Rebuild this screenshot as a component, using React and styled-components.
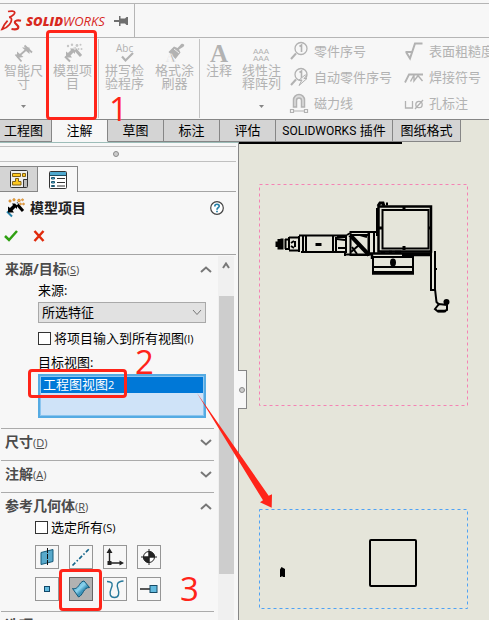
import React from "react";
import styled, { createGlobalStyle } from "styled-components";

const UI = '"Open Sans", "Noto Sans CJK SC", sans-serif';
const RED = "#ff2419";

const Global = createGlobalStyle`
  * { box-sizing: border-box; }
  body { margin: 0; overflow: hidden; background: #f7f7f7; font: 13px/16px ${UI}; color: #000; }
  button, select, input { font: inherit; color: inherit; margin: 0; padding: 0; }
  button { background: none; border: 0; }
  svg { display: block; flex: none; }
`;

const Page = styled.div`
  position: relative;
  display: flex;
  flex-direction: column;
  height: 100vh;
  overflow: hidden;
  white-space: nowrap;
`;

const TitleBar = styled.header`
  display: flex;
  flex: none;
  margin-top: 3px;
  height: 35px;
  border: solid #b5b5b5;
  border-width: 1px 0;
`;

const Brand = styled.div`
  display: flex;
  align-items: center;
  width: 135px;
  border-right: 1px solid #b5b5b5;
  color: #d8281e;
`;

const Wordmark = styled.span`
  margin-left: 4px;
  width: 88px;
  font: italic 13px/16px "Open Sans", sans-serif;
  b { font-weight: 800; }
`;

const Ribbon = styled.div`
  display: flex;
  flex: none;
  height: 81px;
  color: #b2b2b2;
`;

const Tool = styled.button`
  display: flex;
  flex: none;
  flex-direction: column;
  align-items: center;
  width: ${(p) => p.$w}px;
  height: 81px;
  padding-top: 5px;
  line-height: 13px;
`;

const ToolLabel = styled.span`
  margin-top: 1px;
  height: 41px;
`;

const Separator = styled.i`
  flex: none;
  width: 1px;
  margin: 1px 0;
  background: #c4c4c4;
`;

const ToolColumn = styled.div`
  display: flex;
  flex: none;
  flex-direction: column;
  width: 115px;
`;

const SmallTool = styled.button`
  display: flex;
  align-items: center;
  gap: 5px;
  height: 26px;
  padding-left: 4px;
`;

const Tabs = styled.nav`
  display: flex;
  flex: none;
  height: 23px;
  border-top: 1px solid #868686;
  background: #e5e5da;
`;

const Tab = styled.button`
  flex: none;
  width: ${(p) => p.$w}px;
  padding-bottom: 2px;
  border: solid #868686;
  border-width: 0 1px 1px 0;
  border-bottom-color: ${(p) => (p.$active ? "#f7f7f7" : "#868686")};
  background: ${(p) => (p.$active ? "#f7f7f7" : "#d4d4d4")};
  line-height: 18px;
  &:first-child { margin-left: -4px; }
`;

const Latin = styled.span`
  font: 12px/16px Roboto, sans-serif;
`;

const Main = styled.main`
  display: flex;
  flex: 1;
  min-height: 0;
`;

const Panel = styled.aside`
  display: flex;
  flex: none;
  flex-direction: column;
  width: 239px;
  border-top: 1px solid #9dbdb9;
  border-right: 1px solid #868686;
`;

const Splitter = styled.div`
  display: flex;
  flex: none;
  align-items: center;
  justify-content: center;
  height: 16px;
  margin: 3px 2px 4px 0;
  padding-right: 4px;
  border: solid #c0c0c0;
  border-width: 1px 0;
`;

const Dot = styled.i`
  width: 6px;
  height: 6px;
  border: 1px solid #8a8a8a;
  border-radius: 50%;
  background: #ccc;
`;

const PanelTabs = styled.div`
  display: flex;
  flex: none;
  height: 26px;
  margin-right: 2px;
  box-shadow: inset 0 -1px #a5a5a5;
`;

const PanelTab = styled.button`
  display: grid;
  place-items: center;
  width: ${(p) => (p.$active ? 40 : 38)}px;
  border: solid #868686;
  border-width: 1px 1px ${(p) => (p.$active ? 0 : 1)}px 0;
  background: ${(p) => (p.$active ? "#f7f7f7" : "#d4d4d4")};
`;

const PanelTitle = styled.div`
  display: flex;
  flex: none;
  align-items: center;
  gap: 5px;
  height: 32px;
  padding: 0 14px 0 5px;
`;

const Title = styled.h1`
  flex: 1;
  margin: 0;
  font: 700 14px/20px ${UI};
  color: #222;
`;

const Actions = styled.div`
  display: flex;
  flex: none;
  align-items: flex-start;
  gap: 15px;
  height: 31px;
  margin-right: 2px;
  padding: 6px 4px;
  border-bottom: 1px solid #a5a5a5;
`;

const Scroller = styled.div`
  display: flex;
  flex: 1;
  min-height: 0;
`;

const Groups = styled.div`
  flex: 1;
  margin: 1px 4px 0 1px;
  min-width: 0;
  overflow: hidden;
`;

const Group = styled.section`
  border-bottom: 1px solid #ababab;
`;

const GroupHead = styled.button`
  display: flex;
  align-items: center;
  justify-content: space-between;
  width: 100%;
  height: ${(p) => (p.$open ? 26 : 31)}px;
  padding: 0 2px ${(p) => (p.$open ? 0 : 4)}px 4px;
  font-weight: 700;
  font-size: 14px;
  color: #4b4b4b;
`;

const Key = styled.span`
  font-weight: 400;
  font-size: 11px;
`;

const Fields = styled.div`
  display: flex;
  flex-direction: column;
  padding: 0 8px 10px 37px;
`;

const FieldLabel = styled.label`
  height: 20px;
  line-height: 16px;
`;

const SelectBox = styled.div`
  display: grid;
  align-items: center;
  height: 21px;
  border: 1px solid #a9a9a9;
  background: #e1e1e1;
  > * { grid-area: 1 / 1; }
  svg { justify-self: end; margin-right: 3px; pointer-events: none; }
`;

const Select = styled.select`
  appearance: none;
  width: 100%;
  height: 19px;
  padding: 0 3px;
  border: 0;
  background: transparent;
  line-height: 19px;
`;

const Check = styled.label`
  display: flex;
  align-items: center;
  gap: 3px;
  height: 31px;
  input {
    appearance: none;
    width: 13px;
    height: 13px;
    border: 1px solid #333;
    background: #fff;
  }
`;

const ListBox = styled.ul`
  height: 44px;
  margin: 0;
  padding: 1px;
  border: 2px solid #55abe3;
  background: #cfe3f8;
  box-shadow: inset 0 0 0 1px #8cc5ef;
  list-style: none;
`;

const ListItem = styled.li`
  height: 16px;
  padding-left: 2px;
  background: #0078d7;
  color: #fff;
  line-height: 15px;
`;

const Geometry = styled.div`
  padding: 0 0 10px 34px;
  ${Check} { height: 16px; margin-bottom: 10px; }
`;

const IconGrid = styled.div`
  display: grid;
  grid-template-columns: repeat(4, 24px);
  gap: 8px 10px;
`;

const IconButton = styled.button`
  display: grid;
  place-items: center;
  height: 24px;
  border: 1px solid ${(p) => (p.$on ? "#666" : "#969696")};
  background: ${(p) => (p.$on ? "#b2b2b2" : "#f7f7f7")};
`;

const ScrollBar = styled.div`
  display: flex;
  flex: none;
  flex-direction: column;
  width: 16px;
  margin: 1px 4px 0 0;
  background: #f0f0f0;
`;

const ScrollUp = styled.button`
  display: grid;
  place-items: center;
  height: 18px;
`;

const Thumb = styled.div`
  height: 278px;
  margin: 22px 0 0 1px;
  background: #cdcdcd;
`;

const Sheet = styled.div`
  position: relative;
  flex: 1;
  min-width: 0;
  background: #e5e5da;
`;

const SheetEdge = styled.div`
  width: 65%;
  height: 2px;
  background: #000;
`;

const Handle = styled.button`
  position: absolute;
  left: -1px;
  top: 228px;
  display: flex;
  align-items: center;
  width: 9px;
  height: 39px;
  padding-left: 1px;
  border: 1px solid #868686;
  border-left: 0;
  background: #f7f7f7;
`;

const View = styled.div`
  position: absolute;
  left: 20px;
  top: ${(p) => p.$top}px;
`;

const Frame = styled.div`
  position: absolute;
  left: ${(p) => p.$x}px;
  top: ${(p) => p.$y}px;
  width: ${(p) => p.$w}px;
  height: ${(p) => p.$h}px;
  border: 3px solid ${RED};
  border-radius: 4px;
  pointer-events: none;
`;

const Step = styled.span`
  position: absolute;
  left: ${(p) => p.$x}px;
  top: ${(p) => p.$y}px;
  font: 33px/34px "Open Sans", sans-serif;
  color: ${RED};
  pointer-events: none;
`;

const Pointer = styled.svg`
  position: absolute;
  left: 190px;
  top: 388px;
  pointer-events: none;
`;

const Svg = ({ w, h = w, children, ...rest }) => (
  <svg width={w} height={h} viewBox={`0 0 ${w} ${h}`} fill="none" stroke="currentColor" aria-hidden="true" {...rest}>
    {children}
  </svg>
);

const Logo = () => (
  <Svg w={22} h={24} strokeWidth="1.8">
    <path d="M8 2.500c3-.8 6.600-.6 6.700.8.200 1.600-2.700 3.700-5.500 5 3.300 0 2.800 4 .3 7.200-1.700 2.200-4.200 4-7.500 4.800 2-4.600 3.600-6.600 5.600-8.600" />
    <path d="M21 11.700c-3-.8-6-.2-6.200 1.500-.2 1.800 4 2.900 3.500 5.300-.4 1.800-3.300 2.200-6.800 1.500" strokeWidth="2.200" />
  </Svg>
);

const Pin = () => (
  <Svg w={15} h={12} stroke="none" fill="#6e6e6e">
    <path d="M0 5h5v2H0zM5 1h1.500v2.500H11L12.500 2H14v8h-1.500L11 8.500H6.500V11H5z" />
  </Svg>
);

const Dimension = () => (
  <Svg w={20} strokeWidth="1.800">
    <path d="m10.500 2.500 7.500 7M1.500 11.500l6 7M5 13l8.500-7.500" />
    <path d="M3 15V8.500L9.500 14zM8 4.500h7.500V11z" fill="currentColor" stroke="none" />
  </Svg>
);

const Wand = ({ color }) => (
  <Svg w={20} h={20} strokeWidth="2">
    <path d="m2 13.500 5 5M4 12l7-5" stroke={color ? "#2681a8" : "currentColor"} />
    <path d="M3 14.500V8.500L5 10l3-3-1-1.500h5V11l-1.500-1.500-3 3L9 14.500z" fill="currentColor" stroke="none" />
    <path d="m11 5 7 8" strokeWidth="3" />
    <path d="m10.500 4.500 2 2.200" stroke={color ? "#e5eef3" : "#ddd"} strokeWidth="2" />
    <g fill={color ? "#f3b63a" : "#c6c6c6"} stroke={color ? "#b96222" : "none"} strokeWidth=".5">
      <circle cx="5" cy="3" r="1.200" /><circle cx="9" cy="1.800" r="1.200" /><circle cx="14" cy="2.500" r="1.400" />
      <circle cx="17.500" cy="1.800" r="1" /><circle cx="15.500" cy="6" r="1" /><circle cx="18.500" cy="6" r="1" />
    </g>
  </Svg>
);

const Spell = () => (
  <Svg w={20} h={20}>
    <text x="1" y="9" fontSize="10" fontFamily="Open Sans" fill="currentColor" stroke="none">Abc</text>
    <path d="m7 13.500 3.500 4L18 10" strokeWidth="2.200" />
  </Svg>
);

const Brush = () => (
  <Svg w={20} h={20} stroke="none" fill="currentColor">
    <path d="M19 1.500c-1.500-1.300-3-.6-4 1L12.500 5 9 3.500 3.500 9l7 7 5-6.500-1.500-3 4-2.500c1-.7 1.600-1.800 1-2.500z" />
    <path d="m9 6 5 4" stroke="#eee" />
    <text x="1" y="19" fontSize="13" fontFamily="Liberation Serif" fontWeight="700" stroke="#f7f7f7" strokeWidth=".6">A</text>
  </Svg>
);

const Note = () => (
  <Svg w={20} h={20} stroke="none" fill="currentColor">
    <text x="1" y="19" fontSize="25" fontFamily="Liberation Serif" fontWeight="700">A</text>
  </Svg>
);

const Pattern = () => (
  <Svg w={20} h={20} stroke="none" fill="currentColor">
    <text x="1" y="11" fontSize="8" fontFamily="Liberation Sans">AAA</text>
    <text x="1" y="18" fontSize="8" fontFamily="Liberation Sans">AAA</text>
  </Svg>
);

const Balloon = ({ auto }) => (
  <Svg w={20} h={20} strokeWidth="1.300">
    <circle cx="12" cy="7.500" r="6" />
    <path d="m2 18 5-5.500" strokeWidth="2" />
    <path d="m10.500 5.500 2-1.500v7" strokeWidth="1.600" />
    {auto && <path d="m16 8-6 5h3l-3 5.500 8-7h-3l3-3.500z" fill="#f1f1f1" strokeWidth="1" />}
  </Svg>
);

const Magnet = () => (
  <Svg w={20} h={20} strokeWidth="1.200">
    <path d="M4.500 14V7a5.500 5.500 0 0 1 11 0v7h-3V7.500a2.500 2.500 0 0 0-5 0V14z" fill="#ddd" strokeWidth="1.500" />
    <path d="M5 18h10M1.500 16.500h3v3h-3zM15.500 16.500h3v3h-3z" />
  </Svg>
);

const Rough = () => (
  <Svg w={20} h={20} strokeWidth="2">
    <path d="M1.500 11H9M2 11l4 6.500L11 2.500h7.500" />
  </Svg>
);

const Weld = () => (
  <Svg w={20} h={16} strokeWidth="1.400">
    <path d="m1 13.500 4-8h14" strokeWidth="1.800" />
    <path d="M6.500 12.500 10 6v6l4.500-6M13.500 6l5 6" />
  </Svg>
);

const Hole = () => (
  <Svg w={20} h={16} strokeWidth="1.300">
    <path d="M1.500 6v7h7V6M11 14l8-9" /><circle cx="15" cy="9.500" r="3.200" />
  </Svg>
);

const Drop = () => (
  <Svg w={5} h={3} fill="#858585" stroke="none"><path d="M0 0h5L2.500 3z" /></Svg>
);

const Chevron = ({ up, w = 12, width = 2 }) => (
  <Svg w={w} h={7} stroke="#777" strokeWidth={width}>
    <path d={up ? `M1 6 ${w / 2} 1.500 ${w - 1} 6` : `M1 1l${w / 2 - 1} 4.500L${w - 1} 1`} />
  </Svg>
);

const TreeIcon = () => (
  <Svg w={18} h={18} strokeWidth="1">
    <rect x=".5" y=".5" width="17" height="17" rx="1" fill="#eee" stroke="#333" />
    <g fill="#ffc91f" stroke="#806018"><path d="M2.500 3.500h8v3h-8zM12.500 3.500h3v3h-3zM5.500 8.500h3v3h2.500v3.500H2.500v-3.500h3z" /></g>
    <path d="M13.500 17V9.500H17" stroke="#333" /><path d="M14 10h3v7h-3z" fill="#bbb" stroke="none" />
  </Svg>
);

const PropertyIcon = () => (
  <Svg w={18} h={18} strokeWidth="1">
    <rect x=".5" y=".5" width="17" height="17" rx="1" fill="#fff" stroke="#333" />
    <path d="M1 1h16v3H1z" fill="#4fa9cf" stroke="none" /><path d="M1 4.500h16" stroke="#1d4c61" />
    <g fill="#69c3e5" stroke="#1d5872"><path d="M2.500 6.500h3v1.500h-3zM2.500 10.500h3V12h-3zM2.500 14.500h3v1h-3z" /></g>
    <path d="M8 7.500h8M8 11.500h8M8 15h8" stroke="#333" />
  </Svg>
);

const HelpIcon = () => (
  <Svg w={14} h={14}>
    <circle cx="7" cy="7" r="6.300" fill="#fff" stroke="#444" strokeWidth="1.200" />
    <path d="M4.800 5.500C4.800 2.500 9.300 2.600 9.200 5.200 9.100 6.800 7 6.700 7 8.800M7 9.800v1.500" stroke="#2580a8" strokeWidth="1.700" />
  </Svg>
);

const Plane = () => (
  <Svg w={18}>
    <path d="m3 4.500 12-3v12l-12 3z" fill="#58a9cb" stroke="#155b7b" /><path d="M9.500 0v18" stroke="#111" strokeDasharray="5 1" />
  </Svg>
);
const Axis = () => (
  <Svg w={20}><path d="M1.500 18.500 18.500 1.500" stroke="#16678c" strokeWidth="1.700" strokeDasharray="4 2 1.500 2" /></Svg>
);
const Origin = () => (
  <Svg w={20} stroke="#222">
    <path d="M4.500 16V5M4 16h11" strokeWidth="1.400" />
    <path d="m4.500 1 3 5h-6zM19 16l-4.500-2.500v5zM2.500 14h4v4h-4z" fill="#222" stroke="none" />
  </Svg>
);
const Mass = () => (
  <Svg w={18} stroke="#222">
    <circle cx="9" cy="9" r="5.500" fill="#fff" /><path d="M9 9V3.500A5.500 5.500 0 0 1 14.500 9zM9 9v5.500A5.500 5.500 0 0 1 3.500 9z" fill="#222" />
    <path d="M9 1v16M1 9h16" />
  </Svg>
);
const Point = () => <Svg w={6} stroke="#12496a"><rect x=".5" y=".5" width="5" height="5" fill="#62bade" /></Svg>;
const Surface = () => (
  <Svg w={20}>
    <defs>
      <linearGradient id="surf" x1="0" y1="0" x2="1" y2="1">
        <stop offset="0" stopColor="#3a95ba" /><stop offset=".45" stopColor="#8bd3ee" /><stop offset=".6" stopColor="#3b93b9" /><stop offset="1" stopColor="#62b6d7" />
      </linearGradient>
    </defs>
    <path d="M1.500 9.500C5 10.500 7 8 8.500 5.500S12 2 13 2l5.500 6.500c-3 0-4.500 1.500-6 4s-3 5-5 5.500z" fill="url(#surf)" stroke="#0e5679" />
  </Svg>
);
const Curve = () => (
  <Svg w={20} stroke="#28799b" strokeWidth="1.400">
    <path d="M2 2.500c6 0 6 3 4 7.500s-1 8.500 3.500 8.500S14.500 14 13 10s-1.500-7.500 5.500-8" />
  </Svg>
);
const Routing = () => (
  <Svg w={20} stroke="#222">
    <path d="M1 10h10" strokeWidth="1.500" /><rect x="11" y="6.500" width="7" height="7" fill="#62bade" stroke="#174b66" />
  </Svg>
);

const GEOMETRY = [
  ["基准面", Plane], ["基准轴", Axis], ["原点", Origin], ["质心", Mass],
  ["点", Point], ["曲面", Surface], ["曲线", Curve], ["步路点", Routing],
];

const Machine = () => (
  <svg width="209" height="222" viewBox="259 184 209 222" fill="none" stroke="#000" strokeWidth="2" aria-hidden="true">
    <rect x="259.500" y="184.500" width="208" height="221" stroke="#f582b4" strokeWidth="1" strokeDasharray="3 3" />
    <path d="M378.500 206.500h52.500v45h-52.500z" strokeWidth="2.500" />
    <path d="M382.500 210h46v38.500h-46z" />
    <path d="M377.500 208v28" strokeWidth="3" />
    <path d="m378 206 2-3h3l1 3M386 204h2M404 207v3M404 246v4M378 228h4M428 228h4" strokeWidth="3" />
    <path d="M299 235.500h48M301 252h43M306 235v17M303 236v16M333 235v17M336 237v15M299 236v16" />
    <path d="M277 241.500v5.500M279 239v10.500M282 238.500v11" strokeWidth="3" />
    <path d="M285 239.500h4M285 249h4M285.500 239v10M289 237.500h10M289 250.500h10M289 237v13M295 241v6M291 243l3-2M291 246l3 2" />
    <path d="M315.500 244.500h6" strokeWidth="3" />
    <path d="M337 237h9v15h-9M337 239l8 1M338 248h8M344 254.500h29M345 251v5M349.500 232h19v23h-18v-17M350 235h18M347 235l5-3" />
    <path d="m350 235 19 20" strokeWidth="4" />
    <path d="m351 252 8-7M360 235l7 2M352 247l5 7M369 232v22M374 233v21M368 232h11" />
    <path d="M368 253.500h63M372 255v4M381 253h4M389 252h3M402 255h29M395 252h6" strokeWidth="2.500" />
    <path d="M373 257h40v15h-40zM373 267h40" />
    <path d="M372 273h42" strokeWidth="3.500" />
    <ellipse cx="393" cy="262.500" rx="3" ry="4" fill="#000" stroke="none" />
    <path d="M431 251v39M435 251v39M430 290h5M436 268v2" />
    <path d="m435 289 1.500 13 3 3" />
    <path d="m435 309 4-5 8 1v5l-3 1.500h-6zM444 301l4 1M447 300v5" />
    <circle cx="446.500" cy="302" r="2" fill="#000" />
    <path d="M438 311h8" strokeWidth="2.500" />
  </svg>
);

const TopView = () => (
  <svg width="209" height="100" viewBox="259 509 209 100" fill="none" stroke="#000" aria-hidden="true">
    <rect x="259.500" y="509.500" width="208" height="99" stroke="#4fa2f5" strokeDasharray="3 3" />
    <rect x="370" y="540" width="46" height="46" rx="1" strokeWidth="2" />
    <path d="M280 569.500 281.500 567l3.500 2v8h-2l-1-1-1 1h-1z" fill="#000" stroke="none" />
  </svg>
);

const Head = ({ text, k, up }) => (
  <GroupHead $open={up} aria-expanded={!!up}>
    <span>{text}<Key>(<u>{k}</u>)</Key></span>
    <Chevron up={up} />
  </GroupHead>
);

export default function App() {
  return (
    <Page>
      <Global />
      <TitleBar>
        <Brand><Logo /><Wordmark><b>SOLID</b>WORKS</Wordmark><Pin /></Brand>
      </TitleBar>
      <Ribbon>
        <Tool $w={47}><Dimension /><ToolLabel>智能尺<br />寸</ToolLabel><Drop /></Tool>
        <Tool $w={51}><Wand /><ToolLabel>模型项<br />目</ToolLabel></Tool>
        <Separator />
        <Tool $w={51}><Spell /><ToolLabel>拼写检<br />验程序</ToolLabel></Tool>
        <Tool $w={49}><Brush /><ToolLabel>格式涂<br />刷器</ToolLabel></Tool>
        <Separator />
        <Tool $w={38}><Note /><ToolLabel>注释</ToolLabel></Tool>
        <Tool $w={47}><Pattern /><ToolLabel>线性注<br />释阵列</ToolLabel><Drop /></Tool>
        <ToolColumn>
          <SmallTool><Balloon />零件序号</SmallTool>
          <SmallTool><Balloon auto />自动零件序号</SmallTool>
          <SmallTool><Magnet />磁力线</SmallTool>
        </ToolColumn>
        <ToolColumn>
          <SmallTool><Rough />表面粗糙度</SmallTool>
          <SmallTool><Weld />焊接符号</SmallTool>
          <SmallTool><Hole />孔标注</SmallTool>
        </ToolColumn>
      </Ribbon>
      <Tabs>
        <Tab $w={56}>工程图</Tab>
        <Tab $w={56} $active>注解</Tab>
        <Tab $w={56}>草图</Tab>
        <Tab $w={56}>标注</Tab>
        <Tab $w={56}>评估</Tab>
        <Tab $w={117}><Latin>SOLIDWORKS</Latin> 插件</Tab>
        <Tab $w={68}>图纸格式</Tab>
      </Tabs>
      <Main>
        <Panel>
          <Splitter><Dot /></Splitter>
          <PanelTabs>
            <PanelTab aria-label="设计树"><TreeIcon /></PanelTab>
            <PanelTab aria-label="属性" $active><PropertyIcon /></PanelTab>
          </PanelTabs>
          <PanelTitle>
            <Wand color /><Title>模型项目</Title>
            <button aria-label="帮助"><HelpIcon /></button>
          </PanelTitle>
          <Actions>
            <button aria-label="确定"><Svg w={14} h={12} stroke="#2fa012" strokeWidth="2.500"><path d="m1 6 4 4 8-9" /></Svg></button>
            <button aria-label="取消"><Svg w={12} h={12} stroke="#e02a0c" strokeWidth="2.500"><path d="m1.500 1 9 10M10.500 1l-9 10" /></Svg></button>
          </Actions>
          <Scroller>
            <Groups>
              <Group>
                <Head text="来源/目标" k="S" up />
                <Fields>
                  <FieldLabel htmlFor="source">来源:</FieldLabel>
                  <SelectBox>
                    <Select id="source"><option>所选特征</option></Select>
                    <Chevron w={10} width={1} />
                  </SelectBox>
                  <Check><input type="checkbox" /><span>将项目输入到所有视图<Key>(I)</Key></span></Check>
                  <FieldLabel as="span" id="targets">目标视图:</FieldLabel>
                  <ListBox role="listbox" aria-labelledby="targets" tabIndex={0}>
                    <ListItem role="option" aria-selected="true">工程图视图<Key>2</Key></ListItem>
                  </ListBox>
                </Fields>
              </Group>
              <Group><Head text="尺寸" k="D" /></Group>
              <Group><Head text="注解" k="A" /></Group>
              <Group>
                <Head text="参考几何体" k="R" up />
                <Geometry>
                  <Check><input type="checkbox" /><span>选定所有<Key>(S)</Key></span></Check>
                  <IconGrid>
                    {GEOMETRY.map(([name, Icon]) => (
                      <IconButton key={name} aria-label={name} $on={name === "曲面"}><Icon /></IconButton>
                    ))}
                  </IconGrid>
                </Geometry>
              </Group>
              <Group><Head text="选项" k="O" up /></Group>
            </Groups>
            <ScrollBar>
              <ScrollUp aria-label="向上滚动"><Chevron up w={8} /></ScrollUp>
              <Thumb />
            </ScrollBar>
          </Scroller>
        </Panel>
        <Sheet>
          <SheetEdge />
          <View $top={42}><Machine /></View>
          <View $top={367}><TopView /></View>
          <Handle aria-label="折叠面板"><Dot /></Handle>
        </Sheet>
      </Main>
      <Frame $x={46} $y={30} $w={51} $h={90} />
      <Frame $x={28} $y={369} $w={99} $h={29} />
      <Frame $x={59} $y={569} $w={43} $h={42} />
      <Step $x={109} $y={92}>1</Step>
      <Step $x={135} $y={345}>2</Step>
      <Step $x={180} $y={572}>3</Step>
      <Pointer width="90" height="126" viewBox="190 388 90 126" aria-hidden="true">
        <path d="m197 393 71.700 102.700 3.300-1.500-.3 13.500-11.700-5.400 3-2z" fill={RED} />
      </Pointer>
    </Page>
  );
}
